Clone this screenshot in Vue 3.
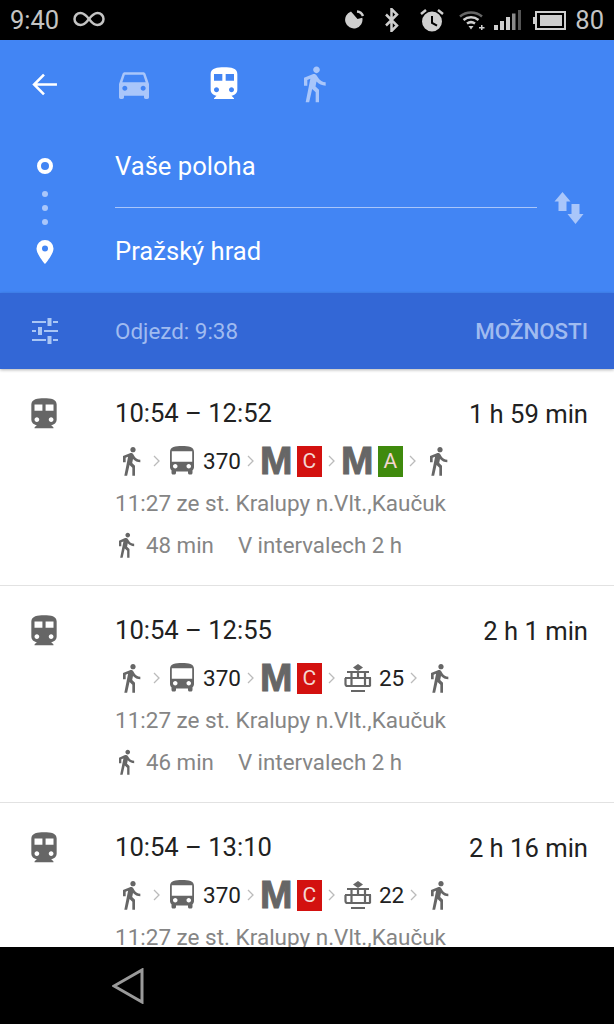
<template>
  <div class="phone">
    <div class="status-bar">
      <span class="clock">9:40</span>
      <svg class="infinity" viewBox="0 0 32 16">
        <path d="M16 8c-3-4-5.500-6-8.500-6a6 6 0 0 0 0 12c3 0 5.500-2 8.500-6s5.500-6 8.500-6a6 6 0 0 1 0 12c-3 0-5.500-2-8.500-6z" />
      </svg>
      <div class="status-icons">
        <svg class="st-moon" viewBox="0 0 22 22">
          <path class="solid" d="M7 2.500l6.500 7.500 4.800-1.200a8.700 8.700 0 1 1-11.300-6.300z" />
          <path class="line" d="M13 2.500a7 7 0 0 1 6 4.500" />
        </svg>
        <svg class="st-bt" viewBox="0 0 16 24">
          <path class="line" d="M2 6.500l11 11-5.500 5.500V1l5.500 5.500-11 11" />
        </svg>
        <svg class="st-alarm" viewBox="0 0 24 24">
          <path class="solid" fill-rule="evenodd" d="M12 3.500a10 10 0 1 1 0 20 10 10 0 0 1 0-20zM11 8v7.500l5.500 3 1-1.700-4.500-2.500V8z" />
          <path class="line" d="M1 6l5-4M23 6l-5-4" />
        </svg>
        <svg class="st-wifi" viewBox="0 0 26 20">
          <path class="dim" d="M1 6.500a17 17 0 0 1 22 0" />
          <path class="line" d="M4.500 10a12 12 0 0 1 15 0M8 13.500a7 7 0 0 1 8 0" />
          <path class="solid" d="M9.500 16h5L12 19.500zM22 15h1.500v2H25.500v1.500H23.500v1.500H22v-1.500H20V17h2z" />
        </svg>
        <svg class="st-signal" viewBox="0 0 27 20">
          <rect class="solid" x="0" y="15" width="4" height="5" />
          <rect class="solid" x="6" y="11" width="4" height="9" />
          <rect class="solid" x="12" y="7" width="4" height="13" />
          <rect class="mid" x="18" y="3.500" width="3.500" height="16.500" />
          <rect class="low" x="24" y="0" width="3" height="20" />
        </svg>
        <svg class="st-battery" viewBox="0 0 33 19">
          <rect class="solid" x="0" y="6" width="2" height="7" />
          <rect class="frame" x="3" y="1" width="29" height="17" />
          <rect class="solid" x="7" y="4" width="22" height="11" />
        </svg>
      </div>
      <span class="battery-level">80</span>
    </div>

    <header class="header">
      <div class="modes">
        <svg class="back" viewBox="0 0 26 24">
          <path d="M25 12H3M12.500 2.500L3 12l9.500 9.500" />
        </svg>
        <div class="tabs">
          <svg class="tab" viewBox="0 0 24 24"><path :d="icons.car" /></svg>
          <svg class="tab active" viewBox="0 0 24 24"><path :d="icons.train" /></svg>
          <svg class="tab" viewBox="0 0 24 24"><path :d="icons.walk" /></svg>
        </div>
      </div>
      <div class="route">
        <div class="rail">
          <span class="ring"></span>
          <div class="dots"><span></span><span></span><span></span></div>
          <svg class="pin" viewBox="0 0 18 24">
            <path fill-rule="evenodd" d="M9 0a8.500 8.500 0 0 1 8.500 8.500C17.500 14.500 9 24 9 24S.5 14.500.5 8.500A8.500 8.500 0 0 1 9 0zm0 5.500a3 3 0 1 0 0 6 3 3 0 0 0 0-6z" />
          </svg>
        </div>
        <div class="fields">
          <div class="field first">Vaše poloha</div>
          <div class="field">Pražský hrad</div>
        </div>
        <svg class="swap" viewBox="0 0 28 32">
          <path d="M7.500 0L15.500 9.500H11.500V19H3.500V9.500H-.5zM16.500 12h8v10h4l-8 10-8-10h4z" />
        </svg>
      </div>
    </header>

    <div class="options">
      <svg class="tune" viewBox="0 0 26 26">
        <path d="M0 3h14v2H0zM21 3h5v2h-5zM15.500 0h4v8h-4zM0 12h4v2H0zM12 12h14v2H12zM6 9h4v8H6zM0 21h14v2H0zM21 21h5v2h-5zM15.500 18h4v8h-4z" />
      </svg>
      <span class="depart">Odjezd: 9:38</span>
      <span class="more">MOŽNOSTI</span>
    </div>

    <main class="list">
      <article v-for="trip in trips" :key="trip.duration" class="trip">
        <svg class="trip-icon" viewBox="0 0 24 24"><path :d="icons.train" /></svg>
        <div class="trip-body">
          <div class="trip-head">
            <span>{{ trip.time }}</span>
            <span class="duration">{{ trip.duration }}</span>
          </div>
          <div class="steps">
            <template v-for="(step, i) in trip.steps" :key="i">
              <svg v-if="step.type === 'walk'" class="walk" viewBox="0 0 24 24"><path :d="icons.walk" /></svg>
              <svg v-else-if="step.type === 'bus'" class="bus" viewBox="0 0 24 24"><path :d="icons.bus" /></svg>
              <svg v-else-if="step.type === 'tram'" class="tram" viewBox="0 0 28 29">
                <path class="tram-fill" d="M14 0l5 3.500-5 3.500-5-3.500z" />
                <path d="M3 8h22M7.500 8v14M14 8v6M21 8v14M1 14h26M1.500 14v6a2 2 0 0 0 2 2h23M26 14v8M7 27h14" />
              </svg>
              <template v-else-if="step.type === 'metro'">
                <span class="metro">M</span>
                <span class="line-badge" :style="{ background: step.color }">{{ step.line }}</span>
              </template>
              <span v-else class="line-no">{{ step.line }}</span>
              <svg v-if="i < trip.steps.length - 1 && step.type !== 'bus' && step.type !== 'tram'" class="chevron" viewBox="0 0 7 12">
                <path d="M1 1l5 5-5 5" />
              </svg>
            </template>
          </div>
          <div class="from">11:27 ze st. Kralupy n.Vlt.,Kaučuk</div>
          <div v-if="trip.walk" class="meta">
            <svg class="meta-walk" viewBox="0 0 24 24"><path :d="icons.walk" /></svg>
            <span class="walk-time">{{ trip.walk }}</span>
            <span>V intervalech 2 h</span>
          </div>
        </div>
      </article>
    </main>

    <nav class="nav-bar">
      <svg class="nav-back" viewBox="0 0 32 36">
        <path d="M30 2v32L2 18z" />
      </svg>
    </nav>
  </div>
</template>

<script setup>
const icons = {
  train: 'M12 2c-4 0-8 .5-8 4v9.500C4 17.430 5.570 19 7.500 19L6 20.500v.5h12v-.5L16.500 19c1.930 0 3.500-1.570 3.500-3.500V6c0-3.500-3.580-4-8-4zM7.500 17c-.83 0-1.500-.67-1.500-1.500S6.670 14 7.500 14s1.500.67 1.500 1.500S8.330 17 7.500 17zm3.500-7H6V6h5v4zm2 0V6h5v4h-5zm3.500 7c-.83 0-1.500-.67-1.500-1.500s.67-1.500 1.500-1.500 1.500.67 1.500 1.500-.67 1.500-1.500 1.500z',
  car: 'M18.920 6.010C18.720 5.420 18.160 5 17.500 5h-11c-.66 0-1.210.42-1.420 1.010L3 12v8c0 .55.45 1 1 1h1c.55 0 1-.45 1-1v-1h12v1c0 .55.45 1 1 1h1c.55 0 1-.45 1-1v-8l-2.080-5.990zM6.500 16c-.83 0-1.500-.67-1.500-1.500S5.670 13 6.500 13s1.500.67 1.500 1.500S7.330 16 6.500 16zm11 0c-.83 0-1.500-.67-1.500-1.500s.67-1.500 1.500-1.500 1.500.67 1.500 1.500-.67 1.500-1.500 1.500zM5 11l1.500-4.500h11L19 11H5z',
  walk: 'M13.500 5.500c1.100 0 2-.9 2-2s-.9-2-2-2-2 .9-2 2 .9 2 2 2zM9.800 8.900L7 23h2.100l1.800-8 2.100 2v6h2v-7.500l-2.100-2 .6-3C14.800 12 16.800 13 19 13v-2c-1.900 0-3.500-1-4.300-2.400l-1-1.600c-.4-.6-1-1-1.700-1-.3 0-.5.1-.8.1L6 8.300V13h2V9.600l1.800-.7',
  bus: 'M4 16c0 .88.39 1.670 1 2.220V20c0 .55.45 1 1 1h1c.55 0 1-.45 1-1v-1h8v1c0 .55.45 1 1 1h1c.55 0 1-.45 1-1v-1.780c.61-.55 1-1.340 1-2.220V6c0-3.500-3.580-4-8-4s-8 .5-8 4v10zm3.500 1c-.83 0-1.500-.67-1.500-1.500S6.670 14 7.500 14s1.500.67 1.500 1.500S8.330 17 7.500 17zm9 0c-.83 0-1.500-.67-1.500-1.500s.67-1.500 1.500-1.500 1.500.67 1.500 1.500-.67 1.500-1.500 1.500zM18.800 12.500H5.200V5.500h13.600z',
}

const RED = '#d3110f'
const GREEN = '#3f8a0d'

const trips = [
  {
    time: '10:54 – 12:52',
    duration: '1 h 59 min',
    walk: '48 min',
    steps: [
      { type: 'walk' },
      { type: 'bus' },
      { type: 'text', line: '370' },
      { type: 'metro', line: 'C', color: RED },
      { type: 'metro', line: 'A', color: GREEN },
      { type: 'walk' },
    ],
  },
  {
    time: '10:54 – 12:55',
    duration: '2 h 1 min',
    walk: '46 min',
    steps: [
      { type: 'walk' },
      { type: 'bus' },
      { type: 'text', line: '370' },
      { type: 'metro', line: 'C', color: RED },
      { type: 'tram' },
      { type: 'text', line: '25' },
      { type: 'walk' },
    ],
  },
  {
    // last row is cut off by the nav bar, its walk line never shows
    time: '10:54 – 13:10',
    duration: '2 h 16 min',
    steps: [
      { type: 'walk' },
      { type: 'bus' },
      { type: 'text', line: '370' },
      { type: 'metro', line: 'C', color: RED },
      { type: 'tram' },
      { type: 'text', line: '22' },
      { type: 'walk' },
    ],
  },
]
</script>

<style scoped>
.phone {
  display: flex;
  flex-direction: column;
  width: 614px;
  height: 1024px;
  overflow: hidden;
  background: #fff;
  font-family: Roboto, "Liberation Sans", sans-serif;
}

/* status bar */
.status-bar {
  display: flex;
  align-items: center;
  flex: none;
  height: 40px;
  padding: 0 10px;
  box-sizing: border-box;
  background: #000;
  color: #c4c4c4;
  font-size: 25.500px;
}
.infinity {
  width: 32px;
  height: 16px;
  margin: 0 0 2px 14px;
  fill: none;
  stroke: #c4c4c4;
  stroke-width: 2.500;
}
.status-icons {
  display: flex;
  align-items: center;
  margin-left: auto;
}
.status-icons svg {
  display: block;
  fill: none;
}
.solid { fill: #cfcfcf; stroke: none; }
.line { fill: none; stroke: #cfcfcf; stroke-width: 2.500; }
.dim { fill: none; stroke: #666; stroke-width: 2.500; }
.mid { fill: #8a8a8a; }
.low { fill: #555; }
.frame { fill: none; stroke: #cfcfcf; stroke-width: 2; }
.st-moon { width: 22px; height: 22px; }
.st-bt { width: 16px; height: 24px; margin-left: 18px; }
.st-alarm { width: 24px; height: 24px; margin-left: 20px; }
.st-wifi { width: 26px; height: 20px; margin-left: 15px; }
.st-signal { width: 27px; height: 20px; margin-left: 9px; }
.st-battery { width: 33px; height: 19px; margin-left: 12px; }
.battery-level { margin-left: 9px; }

/* blue header */
.header {
  flex: none;
  height: 253px;
  background: #4285f4;
  color: #fff;
}
.modes {
  display: flex;
  align-items: center;
  height: 88px;
  padding-left: 31px;
}
.back {
  width: 27px;
  height: 25px;
  fill: none;
  stroke: #fff;
  stroke-width: 2.500;
}
.tabs {
  display: flex;
  gap: 50px;
  margin-left: 56px;
}
.tab {
  display: block;
  width: 40px;
  height: 40px;
  fill: #a9c6fa;
}
.tab.active {
  fill: #fff;
}
.route {
  display: flex;
  align-items: flex-start;
}
.rail {
  display: flex;
  flex-direction: column;
  align-items: center;
  flex: none;
  width: 89px;
  margin-right: 26px;
  padding-top: 30px;
}
.ring {
  width: 16px;
  height: 16px;
  box-sizing: border-box;
  border: 4px solid #fff;
  border-radius: 50%;
}
.dots {
  display: flex;
  flex-direction: column;
  gap: 8px;
  margin-top: 17px;
}
.dots span {
  width: 6px;
  height: 6px;
  border-radius: 50%;
  background: #a9c6fa;
}
.pin {
  width: 18px;
  height: 24px;
  margin-top: 15px;
  fill: #fff;
}
.fields {
  flex: none;
  width: 422px;
  font-size: 25.600px;
}
.field {
  line-height: 86px;
}
.field.first {
  height: 79px;
  line-height: 76px;
  border-bottom: 1px solid #a9c6fa;
}
.swap {
  flex: none;
  width: 28px;
  height: 32px;
  margin: 64px 0 0 18px;
  fill: #a9c6fa;
  overflow: visible;
}

/* departure bar */
.options {
  position: relative;
  display: flex;
  align-items: center;
  flex: none;
  height: 76px;
  padding: 0 26px 0 32px;
  background: #3367d6;
  color: #a0bbf0;
  font-size: 22.400px;
  box-shadow: 0 1px 3px rgba(0, 0, 0, 0.3);
}
.tune {
  width: 26px;
  height: 26px;
  fill: #a9c6f5;
}
.depart {
  margin-left: 57px;
}
.more {
  margin-left: auto;
  font-weight: 500;
  font-size: 22.300px;
}

/* results */
.list {
  flex: 1;
  min-height: 0;
  overflow: hidden;
}
.trip {
  display: flex;
  height: 217px;
  box-sizing: border-box;
  padding: 28px 26px 0 25px;
  border-bottom: 1px solid #e2e2e2;
}
.trip-icon {
  flex: none;
  width: 38px;
  height: 38px;
  margin: -2px 52px 0 0;
  fill: #666;
}
.trip-body {
  flex: 1;
  min-width: 0;
}
.trip-head {
  display: flex;
  justify-content: space-between;
  line-height: 32px;
  font-size: 25.600px;
  color: #212121;
}
.duration {
  position: relative;
  top: 1px;
}
.steps {
  display: flex;
  align-items: center;
  height: 36px;
  margin-top: 14px;
}
.walk {
  flex: none;
  width: 32px;
  height: 32px;
  fill: #666;
}
.bus {
  flex: none;
  width: 36px;
  height: 36px;
  margin-left: -2px;
  fill: #666;
}
.tram {
  flex: none;
  width: 28px;
  height: 29px;
  margin-left: 3px;
  fill: none;
  stroke: #666;
  stroke-width: 2.200;
}
.tram-fill {
  fill: #666;
  stroke: none;
}
.chevron {
  flex: none;
  width: 7px;
  height: 12px;
  margin: 0 6px;
  fill: none;
  stroke: #bbb;
  stroke-width: 1.300;
}
.line-no {
  margin-left: 3px;
  font-size: 22.500px;
  color: #212121;
}
.tram + .line-no {
  margin-left: 7px;
}
.metro {
  font-family: "Liberation Sans", Arial, sans-serif;
  font-size: 39px;
  font-weight: 700;
  line-height: 36px;
  color: #666;
  -webkit-text-stroke: 1px #666;
}
.line-badge {
  display: flex;
  align-items: center;
  justify-content: center;
  flex: none;
  width: 25px;
  height: 31px;
  margin-left: 4.500px;
  font-size: 21px;
  color: #f4d6d2;
}
.from {
  margin-top: 10px;
  line-height: 28px;
  font-size: 22.500px;
  color: #858585;
}
.meta {
  display: flex;
  align-items: center;
  height: 28px;
  margin-top: 14px;
  font-size: 22.300px;
  color: #858585;
}
.meta-walk {
  flex: none;
  width: 28px;
  height: 28px;
  margin-left: -3px;
  fill: #666;
}
.walk-time {
  margin: 0 24px 0 6px;
}

/* navigation */
.nav-bar {
  display: flex;
  align-items: center;
  flex: none;
  height: 77px;
  padding-left: 112px;
  background: #000;
}
.nav-back {
  width: 32px;
  height: 36px;
  fill: none;
  stroke: #9a9a9a;
  stroke-width: 3;
}
</style>
